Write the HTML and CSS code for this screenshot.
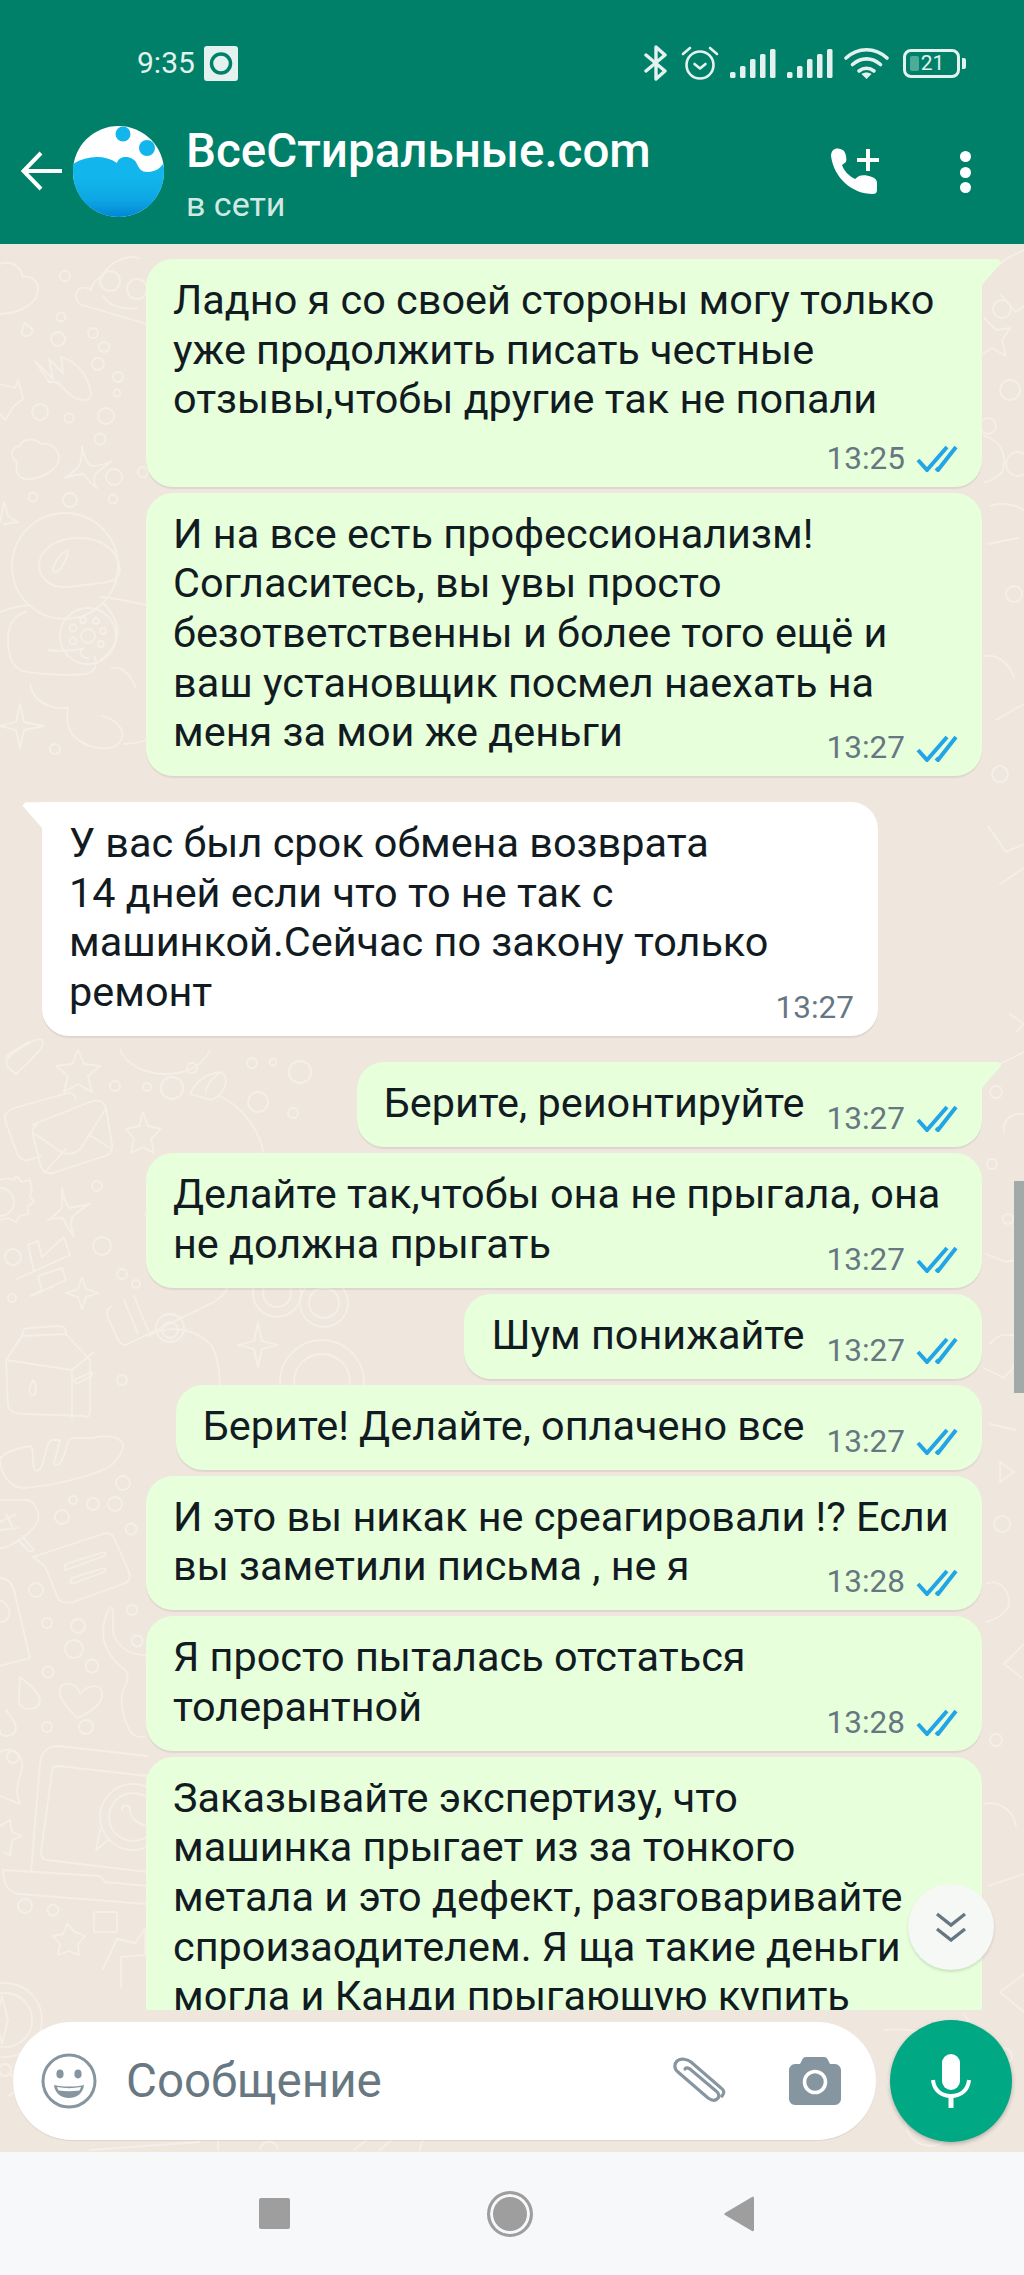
FILE: index.html
```html
<!DOCTYPE html>
<html>
<head>
    <meta charset="UTF-8">
    <title>ВсеСтиральные.com</title>
    <link rel="stylesheet" href="styles.css">
</head>
<body>
<div class="phone">

    <!-- top bar -->
    <header class="topbar">
        <div class="statusbar">
            <div class="status-left">
                <span class="clock">9:35</span>
                <svg class="rec" viewBox="0 0 34 35"><rect width="34" height="35" rx="3" fill="#e3f2ee"/><circle cx="17" cy="17.5" r="9.5" fill="none" stroke="#008069" stroke-width="3.5"/></svg>
            </div>
            <div class="status-right">
                <svg class="st-bt" viewBox="0 0 24 36"><path d="M2 10l19 16-9 8V2l9 8L2 26" fill="none" stroke="#e3f2ee" stroke-width="3.4" stroke-linejoin="round" stroke-linecap="round"/></svg>
                <svg class="st-alarm" viewBox="0 0 38 34"><circle cx="19" cy="19" r="13.5" fill="none" stroke="#e3f2ee" stroke-width="2.6"/><path d="M13.5 18l5.5 4.5 5.5-4.5" fill="none" stroke="#e3f2ee" stroke-width="2.6" stroke-linecap="round" stroke-linejoin="round"/><path d="M2 8l7-6M36 8l-7-6" stroke="#e3f2ee" stroke-width="2.6" stroke-linecap="round"/></svg>
                <svg class="st-signal" viewBox="0 0 46 29"><g fill="#e3f2ee"><rect x="0" y="23" width="5.5" height="6" rx="1.5"/><rect x="10" y="17" width="5.5" height="12" rx="1.5"/><rect x="20" y="10" width="5.5" height="19" rx="1.5"/><rect x="30" y="5" width="5.5" height="24" rx="1.5"/><rect x="40" y="0" width="5.5" height="29" rx="1.5"/></g></svg>
                <svg class="st-signal" viewBox="0 0 46 29"><g fill="#e3f2ee"><rect x="0" y="23" width="5.5" height="6" rx="1.5"/><rect x="10" y="17" width="5.5" height="12" rx="1.5"/><rect x="20" y="10" width="5.5" height="19" rx="1.5"/><rect x="30" y="5" width="5.5" height="24" rx="1.5"/><rect x="40" y="0" width="5.5" height="29" rx="1.5"/></g></svg>
                <svg class="st-wifi" viewBox="0 0 45 32"><g fill="none" stroke="#e3f2ee" stroke-width="3.6" stroke-linecap="round"><path d="M2 11c12-11 29-11 41 0"/><path d="M8.500 17.500c8.500-7.500 19.500-7.500 28 0"/><path d="M15 24c4.500-3.500 10.500-3.500 15 0"/></g><path d="M22.500 32l-5-5c3-2 7-2 10 0z" fill="#e3f2ee"/></svg>
                <div class="battery">
                    <div class="battery-body"><span class="battery-level"></span><span class="battery-num">21</span></div>
                    <span class="battery-nub"></span>
                </div>
            </div>
        </div>

        <div class="appbar">
            <svg class="back" viewBox="0 0 42 40"><path d="M41 20H3M20 2L2.500 20 20 38" fill="none" stroke="#fff" stroke-width="4"/></svg>
            <svg class="avatar" viewBox="0 0 91 91">
                <defs>
                    <linearGradient id="ava" x1="0" y1="0" x2="0" y2="1">
                        <stop offset="0.35" stop-color="#12b5ec"/>
                        <stop offset="0.7" stop-color="#0ea7e4"/>
                        <stop offset="1" stop-color="#0287d6"/>
                    </linearGradient>
                </defs>
                <circle cx="45.500" cy="45.500" r="45.500" fill="#fff"/>
                <path d="M0 38c15-9 32-9 44-1 2-8 16-8 20 1 2 5 5 8 10 8 6 0 12-2 16-8 2 6 1 12 1 8 0 25-20 45-45.500 45S0 71 0 46z" fill="url(#ava)"/>
                <circle cx="50" cy="8" r="7.500" fill="#12b5ec"/>
                <circle cx="74" cy="22" r="8" fill="#12b5ec"/>
            </svg>
            <div class="contact">
                <div class="contact-name">ВсеСтиральные.com</div>
                <div class="contact-status">в сети</div>
            </div>
            <svg class="addcall" viewBox="0 0 48 47"><path d="M4 1c3-1 7 0 9 2 2 3 3 8 2 11l-4 3c2 6 7 11 13 14l4-3c3-1 8-1 13 1 3 1 5 3 5 6v7c0 3-2 4-4 4C21 46 3 30 0 8c0-3 1-6 4-7z" fill="#fff"/><path d="M37 1v22M26 12h22" stroke="#fff" stroke-width="4"/></svg>
            <div class="menu-dots"><span></span><span></span><span></span></div>
        </div>
    </header>

    <!-- chat -->
    <main class="chat">
        <svg class="wallpaper" viewBox="0 0 1024 1908">
            <g fill="none" stroke="#f5efe8" stroke-width="1.800" stroke-linejoin="round" stroke-linecap="round">
                <!-- cloud, drops, bubbles at the top -->
                <path d="M0 20c12-4 20 2 23 13 8-2 15 4 15 12 0 14-16 24-38 25"/>
                <circle cx="65" cy="32" r="5"/><circle cx="61" cy="73" r="4.500"/><circle cx="58" cy="95" r="7"/>
                <circle cx="93" cy="89" r="5"/><circle cx="104" cy="103" r="5"/><circle cx="98" cy="120" r="6"/>
                <circle cx="118" cy="133" r="5"/><circle cx="117" cy="149" r="3.500"/>
                <path d="M25 79c-4 6-4 12 0 13 5 1 9-4 7-7z"/>
                <!-- monster -->
                <path d="M147 80L82 61c-8-3-8-16 0-17 4-1 8 0 9 2 2-8 6-12 12-14 3-12 24-22 36-18"/>
                <circle cx="110" cy="37" r="10"/><circle cx="137" cy="45" r="10"/>
                <path d="M103 52c6 10 20 14 34 12"/>
                <!-- comb hand -->
                <path d="M35 117l18 18 -4-20 14 14 -2-16c18 5 28 22 30 36 0 8-8 9-18 4-8-6-12-12-16-15l-8 0z"/>
                <path d="M0 140l15 4 3-8 5 18 1 0-10 8-9 14-5-6"/>
                <circle cx="40" cy="168" r="8"/><circle cx="69" cy="174" r="4.500"/><circle cx="106" cy="172" r="8"/><circle cx="100" cy="195" r="5.500"/>
                <path d="M17 218c-8-6-6-15 3-16 2-8 16-8 21-2 8-2 18 4 18 14 0 12-20 22-34 21-8-1-10-10-8-17z"/>
                <path d="M82 202c2 12 5 18 10 20 6 0 14-2 20-5-8 6-14 10-17 14-2 6 0 12 2 13-6-4-10-10-14-14-4 0-12 2-18 4 8-6 14-10 15-14 2-6 2-12 2-18z"/>
                <circle cx="114" cy="233" r="8"/><circle cx="33" cy="253" r="4.500"/><circle cx="70" cy="256" r="7"/><circle cx="113" cy="255" r="4.500"/><circle cx="143" cy="228" r="5"/>
                <path d="M0 278l4-20 4 14 10 6-14 2"/>
                <!-- astronaut -->
                <circle cx="65" cy="322" r="53"/>
                <path d="M39 320c2-16 18-26 40-26 22 0 40 12 41 32-1 12-12 12-26 14-16 1-22 4-32 3-14-1-23-10-23-23z"/>
                <path d="M53 325c2-8 8-16 15-19 0 8-6 18-11 22-3 1-4 0-4-3z"/>
                <path d="M0 368c10-4 20-6 30-7M26 368c-10 2-18 12-18 26 0 14 2 26 12 32 10 4 50 6 66 4 10-2 12-12 8-18"/>
                <path d="M48 406c16 2 30 0 36-2 -6 2-4 10 4 10"/>
                <path d="M100 353c24 2 34 6 47 8M104 360c14 14 18 30 8 44-4 6-8 10-12 12"/>
                <circle cx="88" cy="392" r="28"/><circle cx="88" cy="392" r="7"/>
                <circle cx="73" cy="384" r="3.500"/><circle cx="83" cy="376" r="3"/><circle cx="96" cy="377" r="3"/><circle cx="103" cy="387" r="3"/><circle cx="101" cy="400" r="3"/><circle cx="73" cy="397" r="3.500"/>
                <path d="M30 440c2 12 10 20 26 24h12c-2 12 0 24 8 30 14 12 36 14 44 4 6-8 2-20-18-26"/>
                <path d="M112 424c12-2 20 10 24 20M124 500c8 0 16-2 23-4"/>
                <path d="M20 460l4 18 20 4-20 4-4 18-4-18-16-4 16-4z"/>
                <circle cx="55" cy="505" r="5"/>
                <!-- under the white bubble -->
                <path d="M16 830c-8-6-12-10-8-16 8-8 30-22 34-18s-2 12-26 34zM6 812l22-14"/>
                <path d="M78 806l6 14 16 2-12 10 4 16-14-8-14 8 4-16-12-10 16-2z"/>
                <circle cx="115" cy="842" r="5"/><circle cx="147" cy="843" r="4"/><circle cx="172" cy="844" r="11"/>
                <path d="M120 806c6 14 24 24 46 24s38-10 44-24"/>
                <circle cx="192" cy="824" r="5"/><circle cx="252" cy="819" r="5"/><circle cx="273" cy="818" r="3.500"/><circle cx="300" cy="828" r="11"/>
                <circle cx="258" cy="858" r="10"/><circle cx="293" cy="869" r="5"/>
                <!-- envelope -->
                <path d="M76 855c-1-4-4-7-8-6L14 864c-6 2-10 6-9 12l12 33c2 6 6 8 12 7l12-4"/>
                <path d="M32 881l58-23c8-3 14-1 16 6l6 36c1 6-1 10-7 12l-52 17c-6 1-10 0-12-6l-8-32c-1-5 0-8 4-10z"/>
                <path d="M35 890l26 18c8 4 14 2 20-4l24-38M44 929l22-24M110 904l-22-14"/>
                <path d="M143 868l5 14 13 3-10 10 3 14-11-6-12 6 3-14-8-10 13-3z"/>
                <!-- fruit / rocket middle -->
                <path d="M190 850c4-10 14-18 22-20 8-4 14 0 14 8-1 8-6 14-14 18l-22-6zM206 848c0-8 10-18 16-20"/>
                <path d="M220 852c20 10 38 30 44 58 0 6-6 8-14 6-12 10-30 12-44 26-12 14-22 30-26 42-4 0-18-4-36-14"/>
                <path d="M214 960l34 30"/>
                <!-- gear, sparkle, scissors -->
                <path d="M0 936c6-2 10-2 14 0l2-4 6 6 8-2 2 10-2 6 4 6-6 4 0 8-8 2-4 6-8-4-8 2"/><circle cx="0" cy="958" r="14"/>
                <path d="M62 944c2 12 4 18 8 20l20-4c-10 6-16 10-18 14-2 6 0 14 2 18-6-6-8-14-12-18-4 0-12 0-14 2 8-6 14-10 14-14z"/>
                <circle cx="97" cy="942" r="5"/><circle cx="102" cy="1002" r="9"/><circle cx="13" cy="1013" r="8"/><circle cx="122" cy="1030" r="5"/><circle cx="136" cy="1040" r="4"/><circle cx="12" cy="1054" r="4"/>
                <path d="M17 1035l53-24-6-18-22 20-4-16-10 4 6 26M30 1052l12-6-4-14 24-8 4 12-30 14z"/>
                <path d="M82 1033l4 12 12 4-12 4-4 12-4-12-12-4 12-4z"/>
                <!-- flask -->
                <path d="M112 1062c-5 2-6 6-4 12l10 22c2 4 6 6 10 4l86-42c6-4 14-10 14-18l-6-14"/>
                <path d="M124 1056l14 34M134 1052l14 34"/>
                <circle cx="170" cy="1084" r="14"/><circle cx="170" cy="1086" r="8"/>
                <path d="M148 1092c20-12 48-8 64 10 8 16 8 36 8 52"/>
                <circle cx="277" cy="1049" r="24"/><circle cx="277" cy="1049" r="14"/>
                <circle cx="324" cy="1059" r="24"/><circle cx="324" cy="1059" r="15"/>
                <path d="M258 1079l4 18 16 4-16 4-4 18-4-18-16-4 16-4z"/>
                <circle cx="322" cy="1138" r="42"/><circle cx="322" cy="1138" r="28"/>
                <!-- milk carton -->
                <path d="M6 1116l16-24c1-6 2-8 8-8l28-2c6 0 8 2 8 8l24 26 0 52c0 4-2 6-6 4l-60-2c-8 0-14-2-16-8z"/>
                <path d="M22 1092l44-2M6 1116l66 10 22-18M72 1126v48M74 1136l18-8v4l-16 8z"/>
                <path d="M33 1136c-4 6-5 14-1 15 5 1 5-9 1-15z"/>
                <circle cx="122" cy="1136" r="5"/>
                <!-- bread -->
                <path d="M0 1214c6-6 18-10 30-12 4 0 2 16 4 22 2 6 8 2 10-10 2-6 4-18 8-18h8c-2 8-4 18-6 22-1 4 6 4 8-2 4-6 4-20 10-22h20c8-2 22-4 30 4 4 8-6 20-14 26-24 10-56 18-84 20-14 0-24-14-24-30z"/>
                <circle cx="123" cy="1239" r="7"/><circle cx="73" cy="1256" r="4"/><circle cx="93" cy="1260" r="6"/><circle cx="115" cy="1260" r="7"/><circle cx="62" cy="1273" r="7"/><circle cx="131" cy="1285" r="5.500"/>
                <!-- leaf, card -->
                <path d="M0 1256h26c8 0 14 12 12 20-4 10-14 18-22 22-6 4-10 6-16 6M0 1278l16-8M0 1286l18-2M22 1292l12 14-4 2-12-12M6 1270l6 12"/>
                <path d="M33 1313l70-23c6-2 10 0 12 6l14 32c2 6 0 10-6 12l-50 18c-8 2-14 0-16-6l-12-30z"/>
                <path d="M66 1320l38-12c2 0 2 4 0 4l-38 14c-2 0-2-4 0-6zM72 1334l32-10c2 0 2 4 0 4l-32 12c-2 0-2-4 0-6z"/>
                <!-- book, dots, guitar -->
                <path d="M0 1334c8 0 12 6 14 12l16 68-30 8M0 1356c8 4 12 12 8 18-2 4-6 4-8 4"/>
                <circle cx="36" cy="1346" r="7"/><circle cx="47" cy="1379" r="5"/><circle cx="78" cy="1382" r="7"/><circle cx="74" cy="1405" r="9"/><circle cx="92" cy="1422" r="6.500"/><circle cx="48" cy="1428" r="5.500"/><circle cx="132" cy="1366" r="5"/><circle cx="137" cy="1397" r="5.500"/>
                <path d="M110 1363c-6 10-8 22-6 34 4 14 14 24 22 30 4 6 0 14-4 22-2 14 2 26 8 38 4 6 8 6 14 6M112 1364c2 10 0 22 2 28 6 14 18 18 33 20"/>
                <path d="M20 1433c8 6 18 14 20 22 0 8-6 10-12 10-6 0-10-4-9-12z"/>
                <path d="M80 1450c-2-10-16-14-20-6-2 10 8 22 18 30 12-6 26-14 24-26-2-8-14-8-22 2z"/>
                <path d="M6 1466c4 6 10 12 10 18 0 6-6 8-10 8-4 0-6-2-6-6"/>
                <circle cx="47" cy="1483" r="5"/><circle cx="86" cy="1483" r="7"/>
                <!-- laptop with logo -->
                <path d="M31 1628l9-108c1-12 8-18 18-18l90 10"/>
                <path d="M41 1608l11-80c0-4 2-6 6-6l90 10M41 1608c0 6 2 8 6 8l100 12"/>
                <path d="M3 1626l96 6c4 1 4 4 6 6l42 4M3 1626c0 14 6 22 16 24l128 10"/>
                <circle cx="133" cy="1573" r="33"/><circle cx="133" cy="1573" r="24"/>
                <path d="M108 1596l-12 10 4-20M122 1566c0-6 8-6 8 0 0 8 8 14 17 16"/>
                <!-- blob, star -->
                <path d="M0 1508c10-6 18 0 22 10 2 10-4 14-4 22-2 8 0 14 2 20l-20-8"/><circle cx="13" cy="1513" r="6"/>
                <path d="M0 1582l10-6 2 12 10 4-10 4-2 16-6-4"/>
                <circle cx="25" cy="1662" r="7"/><circle cx="53" cy="1666" r="5.500"/>
                <rect x="94" y="1668" width="23" height="20" rx="2"/>
                <path d="M67 1680l8 8 10 4-7 8 1 11-10-4-11 4 2-11-7-8 10-2z"/>
                <path d="M103 1725l14-30 18 4 10-14v26l-24 2v30"/>
                <!-- compass -->
                <circle cx="5" cy="1776" r="37"/><circle cx="5" cy="1776" r="27"/><path d="M2 1752l6 24-6 24-6-24z"/>
                <path d="M8 1830c12 2 12 18 0 22"/>
                <circle cx="5" cy="1826" r="6"/>
                <path d="M90 1906l110-8M218 1880v26M260 1905c4-10 14-10 18 0"/>
                <circle cx="268" cy="1886" r="6"/><circle cx="318" cy="1890" r="5"/>
                <path d="M354 1906l20-16M380 1906l16-14M420 1906c0-10 10-18 22-18"/>
                <!-- right edge -->
                <path d="M1024 6c-14 6-28 14-38 26M1000 50l16 18 8-6"/>
                <circle cx="1002" cy="65" r="9"/>
                <path d="M984 74l12 12 14-2-8 12 4 16-14-8-12 8"/>
                <circle cx="1010" cy="146" r="10"/><circle cx="988" cy="182" r="8"/>
                <path d="M984 192c16 4 24 18 18 36-8 8-14 10-18 10"/>
                <circle cx="1018" cy="220" r="12"/>
                <path d="M990 262c10-4 24-2 34 4M988 300l30-6"/>
                <circle cx="1014" cy="350" r="8"/>
                <path d="M984 412c14-2 26 8 30 22M1024 460l-28 16"/>
                <circle cx="1000" cy="530" r="8"/>
                <path d="M988 582l18 26 18-8M1000 640l24-16"/>
                <path d="M1010 770l14 10-8 8"/><circle cx="996" cy="848" r="6"/>
                <path d="M1000 820l24-12M1024 870c-14-2-22 8-20 18"/>
                <circle cx="992" cy="920" r="5"/><circle cx="1008" cy="975" r="5"/>
                <path d="M986 1010l20 8 18-4M990 1100c10-14 30-12 34 4 0 10-10 18-20 30l-20-10"/>
                <path d="M990 1180l26 6M1000 1218l14 10-14 10z"/>
                <circle cx="1002" cy="1280" r="8"/>
                <path d="M986 1340c14-6 26 8 22 24-6 8-14 12-22 14"/><path d="M1024 1400l-20 20 18 14"/>
                <circle cx="996" cy="1496" r="6"/>
                <path d="M984 1560c16-4 30 8 32 22M1024 1630l-36 12"/>
                <path d="M884 1786c40-4 70 10 86 34 6 20 6 46-10 74M964 1770l22 32"/>
                <circle cx="900" cy="1838" r="12"/><circle cx="900" cy="1838" r="6"/><circle cx="930" cy="1878" r="24"/>
                <path d="M1024 1730l-24 18 24 20"/><circle cx="1004" cy="1812" r="8"/>
            </g>
        </svg>

        <div class="messages">
            <div class="msg out tail">
                Ладно я со своей стороны могу только уже продолжить писать честные отзывы,чтобы другие так не попали
                <span class="meta below"><span class="time">13:25</span><svg class="ticks" viewBox="0 0 42 27"><path d="M2 15l9 10L31 2M20 23l2 2L40 2" fill="none" stroke="#22a5e6" stroke-width="4"/></svg></span>
            </div>
            <div class="msg out">
                И на все есть профессионализм! Согласитесь, вы увы просто безответственны и более того ещё и ваш установщик посмел наехать на меня за мои же деньги
                <span class="meta"><span class="time">13:27</span><svg class="ticks" viewBox="0 0 42 27"><path d="M2 15l9 10L31 2M20 23l2 2L40 2" fill="none" stroke="#22a5e6" stroke-width="4"/></svg></span>
            </div>
            <div class="msg in tail">
                У вас был срок обмена возврата<br>14 дней если что то не так с машинкой.Сейчас по закону только ремонт
                <span class="meta in-meta"><span class="time">13:27</span></span>
            </div>
            <div class="msg out tail">
                Берите, реионтируйте
                <span class="meta"><span class="time">13:27</span><svg class="ticks" viewBox="0 0 42 27"><path d="M2 15l9 10L31 2M20 23l2 2L40 2" fill="none" stroke="#22a5e6" stroke-width="4"/></svg></span>
            </div>
            <div class="msg out">
                Делайте так,чтобы она не прыгала, она не должна прыгать
                <span class="meta"><span class="time">13:27</span><svg class="ticks" viewBox="0 0 42 27"><path d="M2 15l9 10L31 2M20 23l2 2L40 2" fill="none" stroke="#22a5e6" stroke-width="4"/></svg></span>
            </div>
            <div class="msg out">
                Шум понижайте
                <span class="meta"><span class="time">13:27</span><svg class="ticks" viewBox="0 0 42 27"><path d="M2 15l9 10L31 2M20 23l2 2L40 2" fill="none" stroke="#22a5e6" stroke-width="4"/></svg></span>
            </div>
            <div class="msg out">
                Берите! Делайте, оплачено все
                <span class="meta"><span class="time">13:27</span><svg class="ticks" viewBox="0 0 42 27"><path d="M2 15l9 10L31 2M20 23l2 2L40 2" fill="none" stroke="#22a5e6" stroke-width="4"/></svg></span>
            </div>
            <div class="msg out">
                И это вы никак не среагировали !? Если вы заметили письма , не я
                <span class="meta"><span class="time">13:28</span><svg class="ticks" viewBox="0 0 42 27"><path d="M2 15l9 10L31 2M20 23l2 2L40 2" fill="none" stroke="#22a5e6" stroke-width="4"/></svg></span>
            </div>
            <div class="msg out">
                Я просто пыталась отстаться толерантной
                <span class="meta"><span class="time">13:28</span><svg class="ticks" viewBox="0 0 42 27"><path d="M2 15l9 10L31 2M20 23l2 2L40 2" fill="none" stroke="#22a5e6" stroke-width="4"/></svg></span>
            </div>
            <div class="msg out wide">
                Заказывайте экспертизу, что<br>машинка прыгает из за тонкого<br>метала и это дефект, разговаривайте<br>спроизаодителем. Я ща такие деньги<br>могла и Канди прыгающую купить
            </div>
        </div>

        <div class="composer">
            <div class="input-pill">
                <svg class="emoji" viewBox="0 0 56 56"><circle cx="28" cy="28" r="26" fill="none" stroke="#8696a0" stroke-width="3"/><ellipse cx="19" cy="21" rx="3.600" ry="4.400" fill="#8696a0"/><ellipse cx="37" cy="21" rx="3.600" ry="4.400" fill="#8696a0"/><path d="M13 32c9 2 21 2 30 0-1 9-8 13-15 13s-14-4-15-13z" fill="#8696a0"/><path d="M16 34c8 1.500 16 1.500 24 0-.5 1.500-1 2.500-1.500 3.500-7 1-14 1-21 0-.5-1-1-2-1.500-3.500z" fill="#fff"/></svg>
                <span class="placeholder">Сообщение</span>
                <svg class="clip" viewBox="0 0 54 48"><path d="M50 39c3-3 2-6-1-8L19 5c-4-3-10-4-14-1-3 3-3 8 1 11l30 26c3 2 7 3 9 1 3-2 2-6-1-8L18 12c-2-1-4-2-5 0" fill="none" stroke="#8696a0" stroke-width="3.200" stroke-linecap="round"/></svg>
                <svg class="camera" viewBox="0 0 52 48"><path d="M17 0h18c2 0 3 1 4 3l2 4h5c3 0 6 3 6 6v29c0 3-3 6-6 6H6c-3 0-6-3-6-6V13c0-3 3-6 6-6h5l2-4c1-2 2-3 4-3z" fill="#8696a0"/><circle cx="26" cy="25" r="10.500" fill="none" stroke="#fff" stroke-width="3.600"/></svg>
            </div>
            <div class="mic-btn">
                <svg class="mic" viewBox="0 0 40 54"><rect x="11" y="0" width="18" height="36" rx="9" fill="#fff"/><path d="M2 26c1 10 8 16 18 16s17-6 18-16" fill="none" stroke="#fff" stroke-width="4"/><path d="M20 42v12" stroke="#fff" stroke-width="5"/></svg>
            </div>
        </div>

        <div class="scroll-down">
            <svg viewBox="0 0 32 30"><path d="M2 2l14 11L30 2M2 17l14 11 14-11" fill="none" stroke="#667781" stroke-width="3.400"/></svg>
        </div>
        <div class="scrollbar"></div>
    </main>

    <!-- android nav -->
    <footer class="navbar">
        <span class="nav-square"></span>
        <span class="nav-home"></span>
        <svg class="nav-back" viewBox="0 0 30 36"><path d="M28 1c1-.5 2 0 2 1v32c0 1-1 1.500-2 1L1 19c-1-.5-1-1.500 0-2z" fill="#9e9e9e"/></svg>
    </footer>

</div>
</body>
</html>
```

FILE: styles.css
```css
* {
    box-sizing: border-box;
}

body {
    margin: 0;
    font-family: Roboto, "Noto Sans", sans-serif;
}

.phone {
    width: 1024px;
    height: 2275px;
    display: flex;
    flex-direction: column;
    overflow: hidden;
}

/* top bar */
.topbar {
    height: 244px;
    background-color: #008069;
    color: white;
}

.statusbar {
    height: 126px;
    padding: 45px 58px 0 137px;
    display: flex;
    justify-content: space-between;
    align-items: flex-start;
}

.status-left {
    display: flex;
    align-items: center;
    gap: 9px;
    height: 36px;
}

.clock {
    font-size: 30px;
    line-height: 36px;
    color: #e3f2ee;
}

.rec {
    width: 34px;
    height: 35px;
}

.status-right {
    display: flex;
    align-items: center;
    height: 36px;
}

.st-bt {
    width: 24px;
    height: 36px;
}

.st-alarm {
    width: 38px;
    height: 34px;
    margin-left: 13px;
}

.st-signal {
    width: 46px;
    height: 29px;
    margin-left: 11px;
}

.st-wifi {
    width: 45px;
    height: 32px;
    margin-left: 11px;
}

.battery {
    display: flex;
    align-items: center;
    margin-left: 14px;
}

.battery-body {
    width: 57px;
    height: 29px;
    border: 3px solid #e3f2ee;
    border-radius: 8px;
    position: relative;
    display: flex;
    align-items: center;
    justify-content: center;
}

.battery-level {
    position: absolute;
    left: 4px;
    top: 4px;
    bottom: 4px;
    width: 9px;
    background-color: #4dab97;
    border-radius: 2px;
}

.battery-num {
    position: relative;
    left: 1px;
    font-size: 21px;
    line-height: 23px;
    color: #e3f2ee;
}

.battery-nub {
    width: 4px;
    height: 11px;
    margin-left: 2px;
    background-color: #e3f2ee;
    border-radius: 0 2px 2px 0;
}

.appbar {
    height: 118px;
    display: flex;
    align-items: flex-start;
    position: relative;
}

.back {
    width: 42px;
    height: 40px;
    margin: 25px 0 0 21px;
}

.avatar {
    width: 91px;
    height: 91px;
    margin-left: 10px;
}

.contact {
    margin-left: 22px;
    width: 646px;
}

.contact-name {
    font-size: 47.500px;
    font-weight: 500;
    line-height: 50px;
}

.contact-status {
    font-size: 34px;
    line-height: 40px;
    margin-top: 8px;
    color: #d2e8e3;
}

.addcall {
    width: 48px;
    height: 47px;
    margin-top: 22px;
    margin-left: -1px;
}

.menu-dots {
    margin: 25px 0 0 81px;
    display: flex;
    flex-direction: column;
    gap: 4.500px;
}

.menu-dots span {
    display: block;
    width: 11px;
    height: 11px;
    border-radius: 50%;
    background-color: white;
}

/* chat */
.chat {
    flex: 1;
    min-height: 0;
    display: flex;
    flex-direction: column;
    position: relative;
    background-color: #efe7de;
}

.wallpaper {
    position: absolute;
    left: 0;
    top: 0;
    width: 1024px;
    height: 1908px;
}

.messages {
    flex: 1;
    min-height: 0;
    position: relative;
    overflow: hidden;
    padding-top: 15px;
    display: flex;
    flex-direction: column;
    align-items: flex-start;
    gap: 6px;
}

.msg {
    position: relative;
    flex-shrink: 0;
    display: flow-root;
    max-width: 836px;
    padding: 17px 28px 11px 27px;
    font-size: 41.400px;
    line-height: 49.600px;
    color: #111b21;
    border-radius: 27px;
    box-shadow: 0 2px 1px rgba(0, 0, 0, 0.07);
}

.msg.wide {
    width: 836px;
}

.msg.out {
    align-self: flex-end;
    margin-right: 42px;
    background-color: #e7ffdb;
}

.msg.in {
    margin-left: 42px;
    background-color: white;
}

.msg.tail {
    margin-top: 20px;
}

.msg.tail:first-child {
    margin-top: 0;
}

.msg.out.tail {
    border-top-right-radius: 0;
}

.msg.in.tail {
    border-top-left-radius: 0;
}

.msg.tail::before {
    content: "";
    position: absolute;
    top: 0;
    width: 22px;
    height: 28px;
    background-color: inherit;
}

.msg.out.tail::before {
    right: -20px;
    clip-path: polygon(0 0, 84% 0, 100% 4px, 96% 14%, 0 100%);
}

.msg.in.tail::before {
    left: -20px;
    clip-path: polygon(16% 0, 100% 0, 100% 100%, 4% 14%, 0 4px);
}

.meta {
    float: right;
    display: flex;
    align-items: center;
    height: 34px;
    margin-top: 23px;
    margin-left: 22px;
}

.meta.below {
    margin-top: 17px;
}

.meta.in-meta {
    margin-right: -4px;
}

.time {
    font-size: 31.500px;
    line-height: 34px;
    color: #667781;
}

.ticks {
    width: 42px;
    height: 27px;
    margin-left: 11px;
    margin-right: -4px;
}

/* message bar */
.composer {
    position: relative;
    height: 142px;
    flex-shrink: 0;
    padding: 0 12px 0 13px;
    display: flex;
    align-items: center;
    gap: 14px;
}

.input-pill {
    flex: 1;
    height: 118px;
    background-color: white;
    border-radius: 59px;
    box-shadow: 0 1px 1px rgba(0, 0, 0, 0.08);
    display: flex;
    align-items: center;
    padding-left: 28px;
}

.emoji {
    width: 56px;
    height: 56px;
}

.placeholder {
    margin-left: 29px;
    width: 546px;
    font-size: 47.500px;
    color: #687882;
}

.clip {
    width: 54px;
    height: 48px;
}

.camera {
    width: 52px;
    height: 48px;
    margin-left: 63px;
}

.mic-btn {
    width: 122px;
    height: 122px;
    border-radius: 50%;
    background-color: #00a884;
    box-shadow: 0 2px 4px rgba(0, 0, 0, 0.25);
    display: flex;
    align-items: center;
    justify-content: center;
}

.mic {
    width: 40px;
    height: 54px;
}

.scroll-down {
    position: absolute;
    left: 908px;
    top: 1640px;
    width: 86px;
    height: 86px;
    border-radius: 50%;
    background-color: #f6f8f5;
    box-shadow: 0 2px 3px rgba(0, 0, 0, 0.12);
    display: flex;
    align-items: center;
    justify-content: center;
}

.scroll-down svg {
    width: 32px;
    height: 30px;
}

.scrollbar {
    position: absolute;
    right: 0;
    top: 937px;
    width: 10px;
    height: 212px;
    background-color: #a1a9a9;
}

/* android nav */
.navbar {
    height: 123px;
    flex-shrink: 0;
    background-color: #f6f8fa;
    display: flex;
    align-items: center;
    padding-left: 259px;
}

.nav-square {
    width: 31px;
    height: 31px;
    border-radius: 2px;
    background-color: #9e9e9e;
}

.nav-home {
    width: 46px;
    height: 46px;
    margin-left: 197px;
    border-radius: 50%;
    border: 3px solid #9e9e9e;
    background-color: #9e9e9e;
    box-shadow: inset 0 0 0 3px #f6f8fa;
}

.nav-back {
    width: 30px;
    height: 36px;
    margin-left: 191px;
}
```
